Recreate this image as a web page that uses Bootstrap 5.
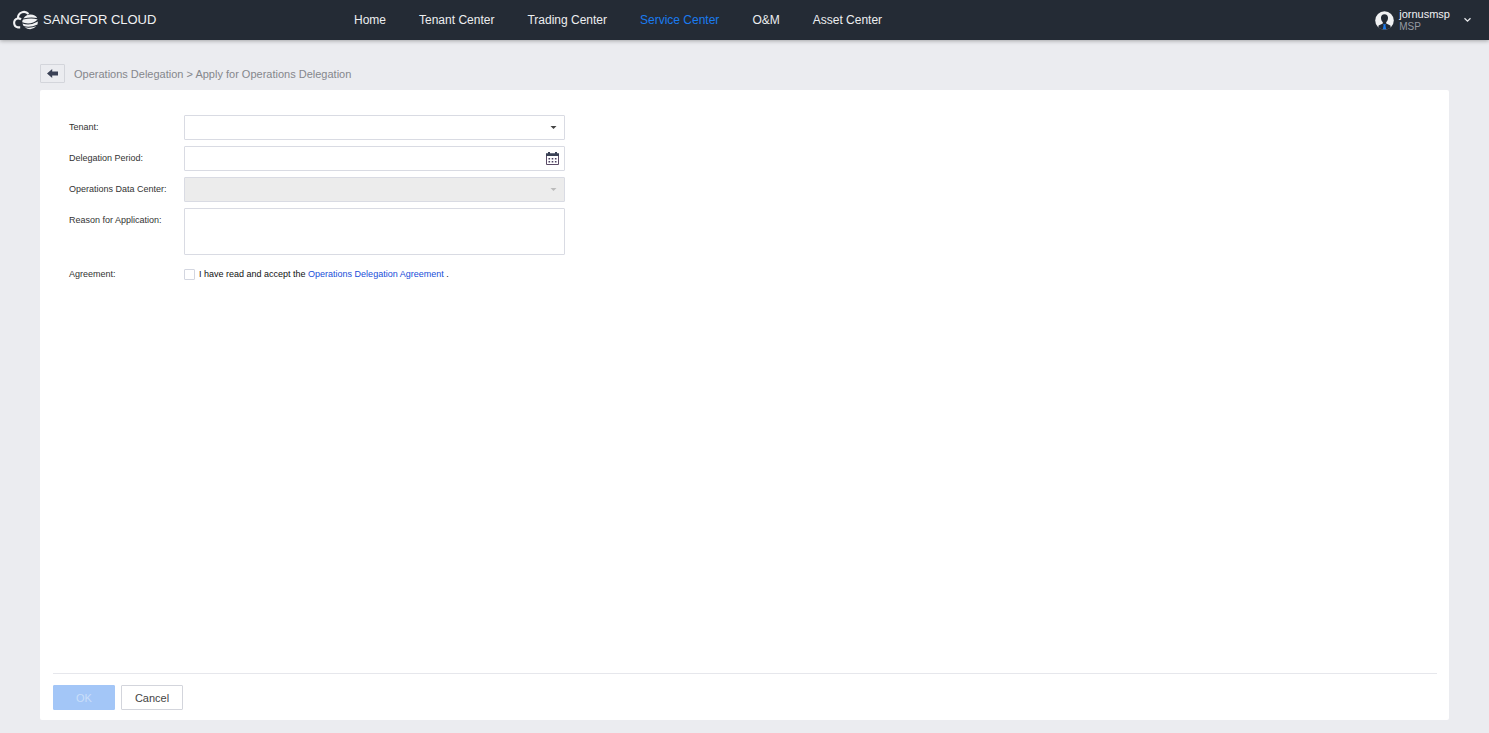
<!DOCTYPE html>
<html lang="en">
<head>
<meta charset="utf-8">
<meta name="viewport" content="width=device-width, initial-scale=1">
<title>Apply for Operations Delegation</title>
<link href="https://cdn.jsdelivr.net/npm/bootstrap@5.3.0/dist/css/bootstrap.min.css" rel="stylesheet">
<style>
  body { font-family: "Liberation Sans", Arial, sans-serif; font-size: 9px; line-height: 12px; color: #333; background: #ebecf0; }
  a { text-decoration: none; }
  .topbar { height: 40px; background: #242b35; box-shadow: 0 1px 4px rgba(0,0,0,.3); padding: 0 17px 0 12px; }
  .brand-area { width: 342px; color: #f1f2f4; font-size: 13px; line-height: 16px; gap: 5px; }
  .main-nav { gap: 33px; font-size: 12px; line-height: 16px; }
  .main-nav .nav-link { padding: 0; color: #eceef0; }
  .main-nav .nav-link.active { color: #1a7bf0; }
  .user-btn { gap: 5px; color: #f1f2f4; font-size: 11px; line-height: 13px; }
  .user-role { font-size: 10px; line-height: 12px; color: #959aa2; }
  .page-area { padding: 24px 40px 13px; }
  .crumbs { gap: 9px; font-size: 11px; line-height: 16px; color: #85878c; margin-bottom: 7px; }
  .crumbs a { color: inherit; }
  .back-btn { width: 25px; height: 19px; border: 1px solid #d3d5db; border-radius: 1px; background: transparent; }
  .panel { background: #fff; border-radius: 2px; padding: 25px 12px 10px 13px; }
  .apply-form { width: 496px; margin-left: 16px; gap: 6px; }
  .field-label { width: 115px; padding-top: 6px; }
  .box { height: 25px; padding: 0 24px 0 6px; font-size: 9px; border: 1px solid #d9dbe3; border-radius: 1px; background-color: #fff; }
  .box:disabled { background-color: #ececec; }
  textarea.box { height: 47px; padding: 5px 6px; resize: none; }
  select.box { background-image: none; }
  .box-icon { right: 6px; pointer-events: none; }
  .agree { margin-top: 7px; }
  .agree .field-label { padding-top: 0; }
  .agree-text { gap: 4px; color: #111; }
  .agree-text a { color: #204ed9; }
  .agree-text .form-check-input { width: 11px; height: 11px; border: 1px solid #d3d6e0; border-radius: 1px; }
  .actions { border-top: 1px solid #e6e7ec; padding-top: 11px; gap: 6px; }
  .act-btn { width: 62px; height: 25px; padding: 0; font-size: 11px; line-height: 16px; border-radius: 1px; border: 1px solid #d3d5dc; color: #444; background: #fff; }
  .act-btn.main-act:disabled { background: #a3c6f7; border-color: #a3c6f7; color: #c9def9; opacity: 1; }
</style>
</head>
<body class="d-flex flex-column min-vh-100">
<header class="topbar d-flex align-items-center">
  <a class="brand-area d-flex align-items-center flex-shrink-0" href="#">
    <svg width="26" height="20" viewBox="0 0 26 20" aria-hidden="true">
      <path d="M8.200 17.400H6A4.600 4.600 0 0 1 5.600 8.400Q7.600 8.200 9 9.400" fill="none" stroke="#f1f2f4" stroke-width="2.100"/>
      <path d="M6 8.200A6 6 0 0 1 16.500 4" fill="none" stroke="#f1f2f4" stroke-width="2.100"/>
      <path d="M11.400 8.600Q14 4.500 18.500 4.600 23.500 4.800 25.200 8 18 6.800 11.400 8.600Z" fill="#f1f2f4"/>
      <path d="M10.200 12.200Q10.200 10.400 11.200 9.600 19 7.700 25.700 9.400 21.500 13.400 16 13.400 12.500 13.200 10.200 12.200Z" fill="#f1f2f4"/>
      <path d="M10.400 13.500Q18 16.200 25.900 11.600L25.500 14.600Q18 18 11.600 16.100Z" fill="#f1f2f4"/>
      <path d="M12.600 17.200Q18 18.400 24.400 16.300 19 21.500 12.600 17.200Z" fill="#f1f2f4"/>
    </svg>
    <span>SANGFOR CLOUD</span>
  </a>
  <nav class="main-nav nav flex-nowrap text-nowrap">
    <a class="nav-link" href="#">Home</a>
    <a class="nav-link" href="#">Tenant Center</a>
    <a class="nav-link" href="#">Trading Center</a>
    <a class="nav-link active" href="#" aria-current="page">Service Center</a>
    <a class="nav-link" href="#">O&amp;M</a>
    <a class="nav-link" href="#">Asset Center</a>
  </nav>
  <button class="user-btn btn border-0 p-0 ms-auto d-flex align-items-center text-start" type="button">
    <svg width="19" height="19" viewBox="0 0 19 19" aria-hidden="true">
      <circle cx="9.500" cy="9.500" r="9.300" fill="#f0f1f3"/>
      <path d="M9.500 3.200C7 3.200 5.800 5 6 7.200 6.200 9.300 7 10.400 7.800 11.200V12.600L3.600 14.500 3.300 16.500A9.300 9.300 0 0 0 15.700 16.500L15.400 14.500 11.200 12.600V11.200C12 10.400 12.800 9.300 13 7.200 13.200 5 12 3.200 9.500 3.200Z" fill="#242b35"/>
      <path d="M8 13.200H11L10.400 14.600 11.200 18.300H7.800L8.600 14.600Z" fill="#1a7bf0"/>
    </svg>
    <span class="d-flex flex-column"><span>jornusmsp</span><span class="user-role">MSP</span></span>
    <svg class="ms-2" width="9" height="6" viewBox="0 0 9 6" aria-hidden="true"><path d="M1.500 1.200L4.500 4.200 7.500 1.200" fill="none" stroke="#e6e8eb" stroke-width="1.300"/></svg>
  </button>
</header>

<main class="page-area flex-grow-1 d-flex flex-column">
  <div class="crumbs d-flex align-items-center">
    <button class="back-btn p-0 d-flex align-items-center justify-content-center" type="button" aria-label="Back">
      <svg width="11" height="9" viewBox="0 0 11 9" aria-hidden="true"><path d="M0 4.500L5.200 0V2.500H11V6.500H5.200V9Z" fill="#3a4155"/></svg>
    </button>
    <span><a href="#">Operations Delegation</a> &gt; Apply for Operations Delegation</span>
  </div>

  <section class="panel flex-grow-1 d-flex flex-column">
    <form class="apply-form d-flex flex-column" id="apply">
      <div class="d-flex">
        <label class="field-label flex-shrink-0" for="tenant">Tenant:</label>
        <div class="position-relative flex-grow-1 d-flex align-items-center">
          <select class="box form-select" id="tenant"><option></option></select>
          <svg class="box-icon position-absolute" width="13" height="13" viewBox="0 0 13 13" aria-hidden="true"><path d="M4.500 5H10.500L7.500 8Z" fill="#444"/></svg>
        </div>
      </div>
      <div class="d-flex">
        <label class="field-label flex-shrink-0" for="period">Delegation Period:</label>
        <div class="position-relative flex-grow-1 d-flex align-items-center">
          <input class="box form-control" id="period" type="text">
          <svg class="box-icon position-absolute" width="13" height="13" viewBox="0 0 13 13" aria-hidden="true">
            <path d="M.5 3V12.500H12.500V3" fill="#fff" stroke="#5b4a66"/>
            <path d="M0 1.200H2V0H4V1.200H9V0H11V1.200H13V4H0Z" fill="#3a4155"/>
            <path d="M2.500 6.700h1.600M5.700 6.700h1.600M8.900 6.700h1.600M2.500 9.700h1.600M5.700 9.700h1.600M8.900 9.700h1.600" stroke="#4a3f60" stroke-width="1.500"/>
          </svg>
        </div>
      </div>
      <div class="d-flex">
        <label class="field-label flex-shrink-0" for="center">Operations Data Center:</label>
        <div class="position-relative flex-grow-1 d-flex align-items-center">
          <select class="box form-select" id="center" disabled><option></option></select>
          <svg class="box-icon position-absolute" width="13" height="13" viewBox="0 0 13 13" aria-hidden="true"><path d="M4.500 5H10.500L7.500 8Z" fill="#bbb"/></svg>
        </div>
      </div>
      <div class="d-flex">
        <label class="field-label flex-shrink-0" for="reason">Reason for Application:</label>
        <textarea class="box form-control" id="reason"></textarea>
      </div>
      <div class="agree d-flex">
        <span class="field-label flex-shrink-0">Agreement:</span>
        <div class="agree-text d-flex align-items-center">
          <input class="form-check-input m-0" type="checkbox" id="accept">
          <span><label for="accept">I have read and accept the</label> <a href="#">Operations Delegation Agreement</a> .</span>
        </div>
      </div>
    </form>
    <div class="actions d-flex mt-auto">
      <button class="act-btn main-act btn" type="submit" form="apply" disabled>OK</button>
      <button class="act-btn btn" type="button">Cancel</button>
    </div>
  </section>
</main>
<script src="https://cdn.jsdelivr.net/npm/bootstrap@5.3.0/dist/js/bootstrap.bundle.min.js"></script>
</body>
</html>
